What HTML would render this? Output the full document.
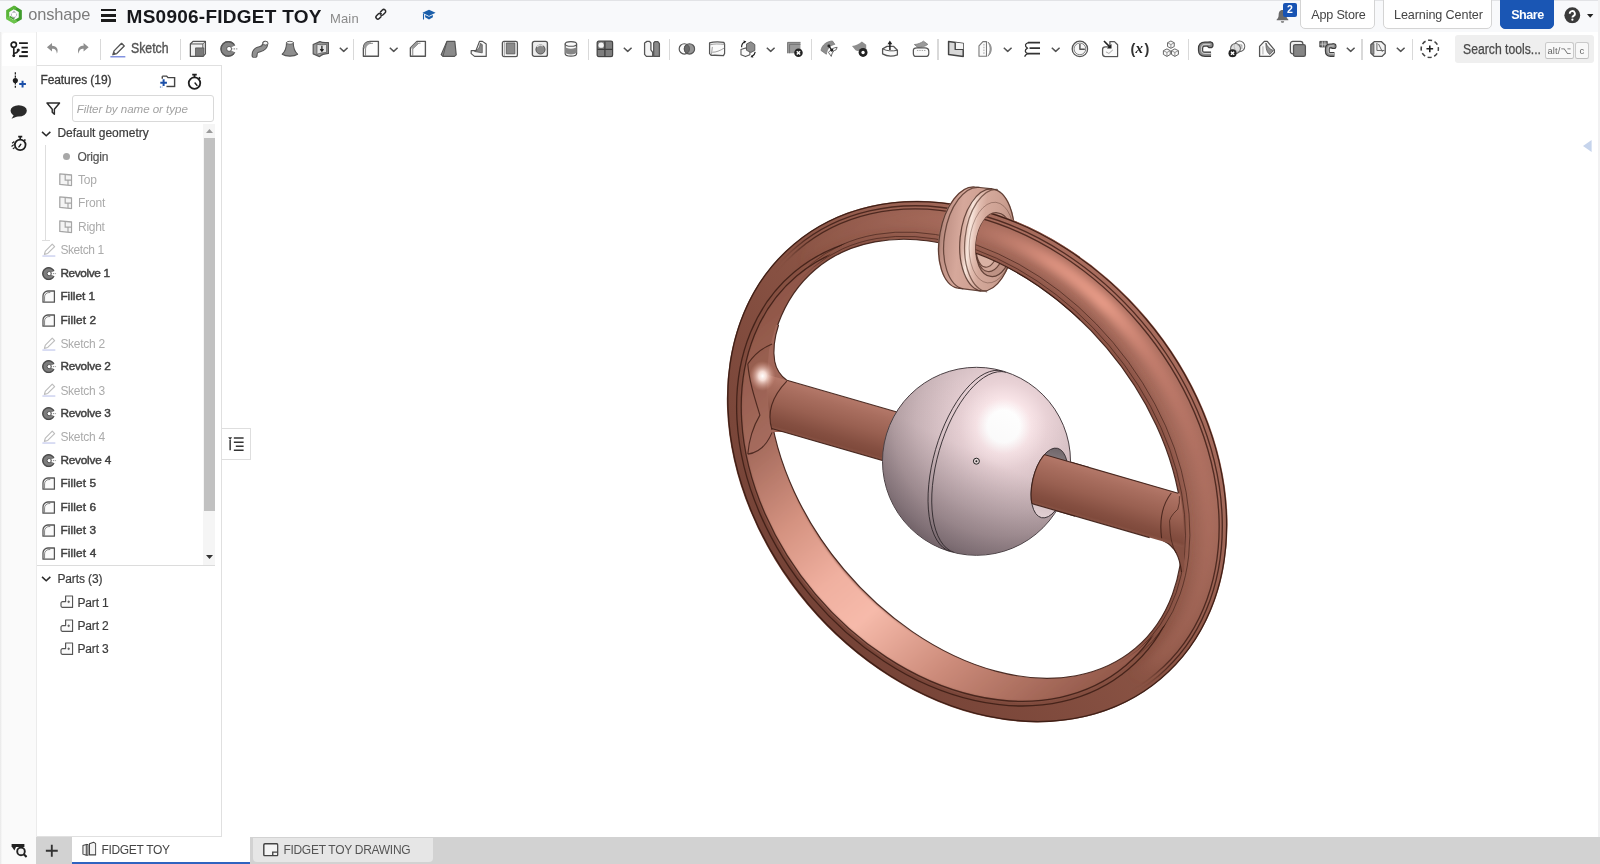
<!DOCTYPE html>
<html lang="en">
<head>
<meta charset="utf-8">
<title>MS0906-FIDGET TOY | Onshape</title>
<style>
*{box-sizing:border-box;margin:0;padding:0}
html,body{width:1600px;height:864px;overflow:hidden;background:#fff}
body{filter:blur(0.4px);font-family:"Liberation Sans",sans-serif;color:#333;position:relative;font-size:12px}
.a{position:absolute}
svg{position:absolute;overflow:visible}
#hdr{position:absolute;left:0;top:0;width:1600px;height:32px;background:#f8f9fb;border-top:1.6px solid #e2e3e6}
#tb{position:absolute;left:0;top:32px;width:1600px;height:34px;background:#fff}
#strip{position:absolute;left:0;top:32px;width:36.6px;height:832px;background:linear-gradient(90deg,#e6e6e6 0,#f3f3f3 1.2px,#fafafa 2.4px,#fafafa 100%);border-right:1.4px solid #ebebeb}
#strip .sel{position:absolute;left:2px;top:1px;width:34px;height:33px;background:#fff;border-radius:3px 0 0 0}
#panel{position:absolute;left:37px;top:65px;width:185px;height:772px;background:#fff;border:1px solid #e0e0e0;border-left:none}
#tabs{position:absolute;left:36.4px;top:836.8px;width:1563.6px;height:27.2px;background:#d2d2d2}
.t{position:absolute;white-space:nowrap;line-height:1}
.btn{position:absolute;top:-2px;height:31px;background:#fff;border:1px solid #d4d4d4;border-radius:0 0 5px 5px}
.sep{position:absolute;top:38.6px;width:1.6px;height:21.6px;background:#d9d9d9}

</style>
</head>
<body>
<svg width="0" height="0" style="position:absolute"><defs>
<symbol id="logo" viewBox="0 0 18 19.2"><g fill="none" stroke-width="3.1" stroke-linejoin="miter"><path d="M9 16.9 L15.3 13.25 L15.3 5.95 L9 2.3" stroke="#3f9b2c"/><path d="M2.7 13.25 L2.7 5.95 L9 2.3 L11.2 3.6" stroke="#59b437"/><path d="M2.7 11.6 L2.7 13.25 L9 16.9 L11.6 15.4" stroke="#6cc44b"/></g><path d="M4.6 11.4 L9.4 14.2" stroke="#4aa632" stroke-width="1.5" fill="none"/><path d="M9 5.4 L12.2 9.6 L9 13.8 L5.8 9.6 Z" fill="#7c7c8a" opacity=".7"/><circle cx="9" cy="9.6" r="2.3" fill="#fff"/></symbol>
<symbol id="link" viewBox="0 0 17 17"><g fill="none" stroke="#2b2b2b" stroke-width="2" stroke-linecap="round"><path d="M8.2 5.2 L10.6 2.8 a2.6 2.6 0 0 1 3.7 3.7 L11.6 9.2 a2.6 2.6 0 0 1 -3.7 0"/><path d="M8.8 11.8 L6.4 14.2 a2.6 2.6 0 0 1 -3.7 -3.7 L5.4 7.8 a2.6 2.6 0 0 1 3.7 0"/></g></symbol>
<symbol id="cap" viewBox="0 0 18 15"><path d="M9 1 L17.5 5 L9 9 L0.5 5 Z" fill="#1b5faa"/><path d="M4 7.6 L9 10 L14 7.6 L14 10.6 L9 13.6 L4 10.6 Z" fill="#1b5faa"/><path d="M1.2 5.4 L2.6 6 L2.6 13.5 L1.2 13.5 Z" fill="#1b5faa"/></symbol>
<symbol id="bell" viewBox="0 0 16 17"><path d="M8 1.2 C4.6 1.2 3.4 4 3.4 7 C3.4 10 2.4 11.4 1 12.6 L1 13.6 L15 13.6 L15 12.6 C13.6 11.4 12.6 10 12.6 7 C12.6 4 11.4 1.2 8 1.2 Z" fill="#6a6a6a"/><path d="M6 14.6 a2 2 0 0 0 4 0 Z" fill="#6a6a6a"/></symbol>
<symbol id="help" viewBox="0 0 18 18"><circle cx="9" cy="9" r="8.6" fill="#3a3a3a"/><path d="M6.2 7.2 a2.8 2.8 0 1 1 4.2 2.4 c-0.9 0.5 -1.3 0.9 -1.3 1.9" fill="none" stroke="#fff" stroke-width="2"/><circle cx="9.1" cy="13.8" r="1.2" fill="#fff"/></symbol>
<symbol id="tree" viewBox="0 0 18.5 17"><g fill="none" stroke="#1e1e1e" stroke-width="1.7"><circle cx="3.6" cy="3.8" r="2.7"/><path d="M3.6 6.5 V15"/><path d="M3.6 12.6 C6.5 12.6 7.6 11.6 8 9.6"/></g><circle cx="3.6" cy="15.2" r="1.5" fill="#1e1e1e"/><circle cx="8.2" cy="9.2" r="1.6" fill="#1e1e1e"/><g stroke="#1e1e1e" stroke-width="2"><path d="M9 2.2 H18"/><path d="M11.5 6.8 H18"/><path d="M11.5 11.2 H18"/><path d="M9 15.6 H18"/></g></symbol>
<symbol id="addf" viewBox="0 0 15 17"><path d="M3.4 0 V17" stroke="#222" stroke-width="1.3" stroke-dasharray="2.2 1.2" fill="none"/><circle cx="3.4" cy="8.4" r="2.6" fill="#1e1e1e"/><path d="M10.7 8.6 V15.4 M7.3 12 H14.1" stroke="#1b4fa8" stroke-width="2" fill="none"/></symbol>
<symbol id="comment" viewBox="0 0 18 15"><ellipse cx="9" cy="6.2" rx="8.6" ry="6" fill="#2a2a2a"/><path d="M4.5 9.5 L1.5 14.6 L8.5 11.6 Z" fill="#2a2a2a"/></symbol>
<symbol id="stopw" viewBox="0 0 18 17"><circle cx="9" cy="10.2" r="6.1" fill="none" stroke="#1e1e1e" stroke-width="1.9"/><path d="M6.6 1.2 H11.4 M9 1.2 V4 M13.6 4.2 L15 5.6" stroke="#1e1e1e" stroke-width="1.9" fill="none"/><path d="M9.6 10.2 L11.6 12.6" stroke="#1e1e1e" stroke-width="1.6" stroke-linecap="round"/></symbol>
<symbol id="stopw2" viewBox="0 0 18 17"><circle cx="10" cy="10.2" r="5.8" fill="none" stroke="#1e1e1e" stroke-width="1.9"/><path d="M7.8 1.2 H12.2 M10 1.2 V4 M14.4 4.4 L15.6 5.6" stroke="#1e1e1e" stroke-width="1.8" fill="none"/><path d="M10.6 9.6 L8.6 12.4" stroke="#1e1e1e" stroke-width="1.6" stroke-linecap="round"/><path d="M3.6 6.5 L1.2 8.4 M3 10 L0.6 12 M4 13 L2 14.6" stroke="#1e1e1e" stroke-width="1.2"/></symbol>
<symbol id="folderp" viewBox="0 0 17 13.5"><path d="M3 1.2 H7.6 L9 2.8 H16 V12.2 H7.4" fill="none" stroke="#444" stroke-width="1.5"/><path d="M3 1.2 V4" stroke="#444" stroke-width="1.5"/><path d="M4.4 4.6 V11.6 M0.9 8.1 H7.9" stroke="#1b4fa8" stroke-width="2.1" fill="none"/><path d="M0.5 12.8 H3" stroke="#1b4fa8" stroke-width="1.2" stroke-dasharray="1 1"/></symbol>
<symbol id="funnel" viewBox="0 0 15 13.6"><path d="M1 1 H14 L8.6 7.4 V12.6 L6.4 10.6 V7.4 Z" fill="none" stroke="#2b2b2b" stroke-width="1.5" stroke-linejoin="round"/></symbol>
<symbol id="chev" viewBox="0 0 11 6.5"><path d="M1 1 L5.5 5.2 L10 1" fill="none" stroke="#2b2b2b" stroke-width="1.7"/></symbol>
<symbol id="caret" viewBox="0 0 9.4 5.4"><path d="M0.8 0.8 L4.7 4.4 L8.6 0.8" fill="none" stroke="#555" stroke-width="1.5"/></symbol>
<symbol id="plane" viewBox="0 0 13.4 13.4"><path d="M0.8 0.8 L12.6 2 V12.6 L0.8 11.4 Z" fill="#f4f4f4" stroke="#a6a6a6" stroke-width="1.3" stroke-linejoin="round"/><path d="M6.2 1.4 V7.2 H12.4 M9 7.2 V12" fill="none" stroke="#a6a6a6" stroke-width="1.2"/></symbol>
<symbol id="sketch" viewBox="0 0 14 14"><path d="M2.4 11.6 L3.4 8.2 L10.4 1.2 L12.8 3.6 L5.8 10.6 Z" fill="none" stroke="#666" stroke-width="1.3" stroke-linejoin="round"/><path d="M0.4 13.4 H13.6" stroke="#7080d8" stroke-width="1.3"/></symbol>
<symbol id="sketchd" viewBox="0 0 14 14"><path d="M2.4 11.6 L3.4 8.2 L10.4 1.2 L12.8 3.6 L5.8 10.6 Z" fill="none" stroke="#bdbdbd" stroke-width="1.2" stroke-linejoin="round"/><path d="M0.4 13.4 H13.6" stroke="#b9c0ea" stroke-width="1.3"/></symbol>
<symbol id="revolve" viewBox="0 0 15 14"><circle cx="7" cy="7" r="6.4" fill="#7d7d7d" stroke="#4a4a4a" stroke-width="1.1"/><path d="M7 7 L14.4 3.6 L14.4 10.4 Z" fill="#fff"/><circle cx="7.6" cy="7" r="2.2" fill="#fff" stroke="#4a4a4a" stroke-width="0.9"/><path d="M12.2 4 A6 6 0 1 0 12.2 10" fill="none" stroke="#4a4a4a" stroke-width="0.9"/><path d="M9 7 H15" stroke="#666" stroke-width="0.8" stroke-dasharray="1.5 1"/></symbol>
<symbol id="fillet" viewBox="0 0 13.6 13.4"><path d="M1 12.4 V6 A5 5 0 0 1 6 1 H12.6 V12.4 Z" fill="#fafafa" stroke="#555" stroke-width="1.3" stroke-linejoin="round"/><path d="M2.6 12 V7 A4.4 4.4 0 0 1 7 2.6 H8.4" fill="none" stroke="#777" stroke-width="0.9"/></symbol>
<symbol id="part" viewBox="0 0 13.6 13.4"><path d="M5.6 1 H12.6 V12.4 H2.4 A1.6 1.6 0 0 1 1 10.8 V8.2 A1.6 1.6 0 0 1 2.6 6.6 H5.6 Z" fill="#fafafa" stroke="#555" stroke-width="1.2" stroke-linejoin="round"/><path d="M7.4 6.8 H10 M8.7 5.5 V8.1" stroke="#555" stroke-width="0.9"/></symbol>
<symbol id="treebtn" viewBox="0 0 18 16"><path d="M1 1 L4 4.4 M4 1 L1 4.4" stroke="#444" stroke-width="0" /><path d="M1.2 1.2 H5.2 L3.2 4 Z" fill="#333"/><g stroke="#333" stroke-width="1.5"><path d="M7 2 H17"/><path d="M3.2 4 V14.6"/><path d="M7 6.4 H17"/><path d="M9 10.6 H17"/><path d="M7 14.6 H17"/></g></symbol>
<symbol id="tabps" viewBox="0 0 15.6 16"><path d="M1 4.6 L4.6 3.4 V15 L1 13.8 Z M4.6 3.4 H6.4 V15 H4.6" fill="#f2f2f2" stroke="#444" stroke-width="1.1" stroke-linejoin="round"/><path d="M8 2.6 L12.4 1 L14.6 2.6 V14.6 H8 Z" fill="#f2f2f2" stroke="#444" stroke-width="1.1" stroke-linejoin="round"/></symbol>
<symbol id="tabdr" viewBox="0 0 16 14"><rect x="0.8" y="0.8" width="14.4" height="12.4" rx="1.2" fill="#f4f4f4" stroke="#444" stroke-width="1.5"/><path d="M10 13 V9.4 H15" fill="none" stroke="#444" stroke-width="1.4"/></symbol>
<symbol id="plus" viewBox="0 0 16 16"><path d="M8 1 V15 M1 8 H15" stroke="#333" stroke-width="2.2"/></symbol>
<symbol id="tabmgr" viewBox="0 0 16.4 15"><path d="M0.6 1 H13.4 V4 H0.6 Z" fill="#222"/><path d="M1 4 H5 L3.4 7.4 Z" fill="#222"/><circle cx="10" cy="8.4" r="3.8" fill="#f0f0f0" stroke="#222" stroke-width="1.9"/><path d="M12.8 11.2 L15.6 14" stroke="#222" stroke-width="2.2"/></symbol>
<symbol id="undo" viewBox="0 0 13 13"><path d="M6.2 1 L0.8 5.6 L6.2 10.2 V7.2 C9.6 7.2 11 8.6 11.4 12.6 C13.4 8 11.4 4 6.2 4 Z" fill="#8e8e8e"/></symbol>
<symbol id="redo" viewBox="0 0 13 13"><path d="M6.8 1 L12.2 5.6 L6.8 10.2 V7.2 C3.4 7.2 2 8.6 1.6 12.6 C-0.4 8 1.6 4 6.8 4 Z" fill="#8e8e8e"/></symbol>
<symbol id="pencil" viewBox="0 0 16.4 16"><path d="M3 13 L4.2 9 L12 1.2 L14.8 4 L7 11.8 Z" fill="#fff" stroke="#555" stroke-width="1.4" stroke-linejoin="round"/><path d="M3 13 L4 9.8 L6.2 12 Z" fill="#555"/><path d="M0.4 15.2 H16" stroke="#5a6fd6" stroke-width="1.4"/></symbol>
<symbol id="tb-extrude" viewBox="0 0 18 18"><path d="M1.4 4 L4 1.4 H16.6 V14 L14 16.6 H1.4 Z" fill="#f0f0f0" stroke="#555" stroke-width="1.3" stroke-linejoin="round"/><path d="M1.4 4 H14 V16.6 M14 4 L16.6 1.4" fill="none" stroke="#555" stroke-width="1" stroke-linejoin="round"/><rect x="6.6" y="8" width="8.4" height="8.4" fill="#7a7a7a" stroke="#555" stroke-width="0.8" stroke-linejoin="round"/></symbol>
<symbol id="tb-revolve" viewBox="0 0 18 18"><circle cx="8.4" cy="9" r="7.4" fill="#858585" stroke="#555" stroke-width="1.2" stroke-linejoin="round"/><path d="M8.4 9 L17 4.6 L17 13.4 Z" fill="#fff"/><path d="M14 4.2 A7.4 7.4 0 1 0 14 13.8" fill="none" stroke="#555" stroke-width="1.2" stroke-linejoin="round"/><circle cx="9.2" cy="9" r="2.5" fill="#fff" stroke="#555" stroke-width="0.9" stroke-linejoin="round"/><path d="M11 9 H17.6" stroke="#666" stroke-width="0.9" stroke-dasharray="1.6 1.1"/></symbol>
<symbol id="tb-sweep" viewBox="0 0 18 18"><path d="M3.6 15.4 C3.6 6 13.4 12.6 14.4 4" fill="none" stroke="#555" stroke-width="6.2" stroke-linecap="round"/><path d="M3.6 15.4 C3.6 6 13.4 12.6 14.4 4" fill="none" stroke="#909090" stroke-width="4" stroke-linecap="round"/><ellipse cx="14.6" cy="3.2" rx="2.6" ry="1.9" fill="#f4f4f4" stroke="#555" stroke-width="0.9" stroke-linejoin="round"/></symbol>
<symbol id="tb-loft" viewBox="0 0 18 18"><path d="M5.6 2.6 C5.6 8 4 12 1.2 14.4 C5 17 13 17 16.8 14.4 C14 12 12.4 8 12.4 2.6 Z" fill="#8e8e8e" stroke="#555" stroke-width="1.1" stroke-linejoin="round"/><ellipse cx="9" cy="2.8" rx="3.5" ry="1.5" fill="#f4f4f4" stroke="#555" stroke-width="0.9" stroke-linejoin="round"/></symbol>
<symbol id="tb-thicken" viewBox="0 0 18 18"><path d="M1.2 4.6 L8 1.6 C10 3 12 3 16.6 2.6 V13.6 C12 14 10 14.4 7.6 16.8 L1.2 14 Z" fill="#9a9a9a" stroke="#555" stroke-width="1.2" stroke-linejoin="round"/><path d="M5 4.2 C8 5 11 5 14.8 4.4 V12.6 C11 13 8 13 5 14.6 Z" fill="#e4e4e4" stroke="#555" stroke-width="0.8" stroke-linejoin="round"/><path d="M10 5.8 V10.6 M8.4 9.2 L10 11.4 L11.6 9.2" fill="none" stroke="#222" stroke-width="1.3"/></symbol>
<symbol id="tb-fillet" viewBox="0 0 18 18"><path d="M1.4 16.4 V8 A6.6 6.6 0 0 1 8 1.4 H16.6 V16.4 Z" fill="#fdfdfd" stroke="#555" stroke-width="1.4" stroke-linejoin="round"/><path d="M3.6 16 V9 A5.6 5.6 0 0 1 9.2 3.4 H11" fill="none" stroke="#777" stroke-width="0.9" stroke-linejoin="round"/><path d="M1.4 8 A6.6 6.6 0 0 1 8 1.4 L9.4 3.4 A5.6 5.6 0 0 0 3.6 9 Z" fill="#9a9a9a"/></symbol>
<symbol id="tb-chamfer" viewBox="0 0 18 18"><path d="M1.4 16.4 V8 L8 1.4 H16.6 V16.4 Z" fill="#fdfdfd" stroke="#555" stroke-width="1.4" stroke-linejoin="round"/><path d="M3.8 16 V9 L10 3.2 H11.6" fill="none" stroke="#777" stroke-width="0.9" stroke-linejoin="round"/><path d="M1.4 8 L8 1.4 L10 3.2 L3.8 9 Z" fill="#9a9a9a"/></symbol>
<symbol id="tb-draft" viewBox="0 0 18 18"><path d="M7 1.4 H15 L16.4 15 L14.6 16.6 H3 L1.2 14.8 Z" fill="#8a8a8a" stroke="#555" stroke-width="1.2" stroke-linejoin="round"/><path d="M7 1.4 L3 16.6" fill="none" stroke="#555" stroke-width="0.9" stroke-linejoin="round"/></symbol>
<symbol id="tb-rib" viewBox="0 0 18 18"><path d="M9.6 1.4 L12.6 1.4 L16.4 4 V16.6 H4.6 L1.2 13.8 V10.8 L6 10.8 Z" fill="#fafafa" stroke="#555" stroke-width="1.2" stroke-linejoin="round"/><path d="M10.4 3.4 C10 8 8 10.6 4.6 11.6 L12.4 13 V4.6 Z" fill="#8a8a8a" stroke="#555" stroke-width="0.8" stroke-linejoin="round"/></symbol>
<symbol id="tb-shell" viewBox="0 0 18 18"><rect x="1.4" y="1.4" width="15.2" height="15.4" rx="1.6" fill="#f2f2f2" stroke="#555" stroke-width="1.3" stroke-linejoin="round"/><rect x="5.4" y="3" width="8.6" height="11" fill="#8a8a8a" stroke="#555" stroke-width="0.8" stroke-linejoin="round"/><path d="M3.4 2 V16.4" fill="none" stroke="#999" stroke-width="0.8" stroke-linejoin="round"/></symbol>
<symbol id="tb-hole" viewBox="0 0 18 18"><rect x="1.4" y="1.4" width="15.2" height="15.2" rx="2" fill="#ededed" stroke="#555" stroke-width="1.4" stroke-linejoin="round"/><circle cx="9.6" cy="9.6" r="4.6" fill="#8a8a8a" stroke="#555" stroke-width="1" stroke-linejoin="round"/><path d="M6 7 A4.6 4.6 0 0 1 12 6" fill="none" stroke="#d8d8d8" stroke-width="1.3"/></symbol>
<symbol id="tb-thread" viewBox="0 0 18 18"><path d="M3.2 4 V14 A5.8 2.4 0 0 0 14.8 14 V4 Z" fill="#fafafa" stroke="#555" stroke-width="1.2" stroke-linejoin="round"/><path d="M3.2 6.6 V12.4 A5.8 2.2 0 0 0 14.8 12.4 V6.6 A5.8 2.2 0 0 1 3.2 6.6 Z" fill="#858585"/><ellipse cx="9" cy="4" rx="5.8" ry="2.4" fill="#fafafa" stroke="#555" stroke-width="1.1" stroke-linejoin="round"/></symbol>
<symbol id="tb-pattern" viewBox="0 0 18 18"><rect x="1.2" y="1.2" width="15.6" height="15.6" rx="1.6" fill="#7e7e7e" stroke="#444" stroke-width="1.3" stroke-linejoin="round"/><path d="M9 1.4 V16.6 M1.4 9.4 H16.6" stroke="#3c3c3c" stroke-width="1.3"/><circle cx="5.2" cy="5.2" r="2.7" fill="#f4f4f4"/></symbol>
<symbol id="tb-mirror" viewBox="0 0 18 18"><path d="M1.6 3 L4 1.4 H6.6 L8 3 V10 L9.8 12.4 V16.6 H3.4 L1.6 14.6 Z" fill="#f4f4f4" stroke="#555" stroke-width="1.3" stroke-linejoin="round"/><path d="M16.6 3.6 L15 1.6 H12 L10.8 3 V16.6 H16.6 Z" fill="#8a8a8a" stroke="#555" stroke-width="1.3" stroke-linejoin="round"/></symbol>
<symbol id="tb-boolean" viewBox="0 0 18 18"><circle cx="6.4" cy="9" r="5.2" fill="#fafafa" stroke="#555" stroke-width="1.2" stroke-linejoin="round"/><circle cx="11.6" cy="9" r="5.2" fill="#8a8a8a" fill-opacity=".9" stroke="#555" stroke-width="1.2" stroke-linejoin="round"/><path d="M9 4.5 A5.2 5.2 0 0 1 9 13.5 A5.2 5.2 0 0 1 9 4.5 Z" fill="#6a6a6a" stroke="#555" stroke-width="0.9" stroke-linejoin="round"/></symbol>
<symbol id="tb-split" viewBox="0 0 18 18"><path d="M1.6 3 C6 1.6 11 1.8 16 2.4 L16.8 4.2 V13.6 L15.6 15.8 C10 15.4 6 15.2 3.4 15.6 L1.6 13.8 Z" fill="#fafafa" stroke="#555" stroke-width="1.3" stroke-linejoin="round"/><path d="M1.8 5 C6 3.6 11 4 16.6 4.4 M3.4 15.4 L4.4 7 M4.4 12.4 C8 12.4 12 11 16.6 8" fill="none" stroke="#888" stroke-width="0.8" stroke-linejoin="round"/></symbol>
<symbol id="tb-transform" viewBox="0 0 18 18"><path d="M2 9.6 L6.6 8 L11 9.6 V15 L6.6 16.8 L2 15 Z" fill="#fafafa" stroke="#555" stroke-width="1.1" stroke-linejoin="round"/><path d="M7.6 4 L12 1.8 L16 4.6 V10.6 L12 12.6 L7.6 10.4 Z" fill="#8e8e8e" stroke="#555" stroke-width="0.9" stroke-linejoin="round"/><path d="M2.6 7.4 C2.6 4.6 4.2 2.6 6 1.8" fill="none" stroke="#222" stroke-width="1.2"/><path d="M4.4 0.4 L7.4 1.2 L5.6 3.6 Z" fill="#222"/><path d="M16.4 12 C16 14.4 14.6 16 13 16.8" fill="none" stroke="#222" stroke-width="1.2"/><path d="M14.6 18 L11.6 17.4 L13.2 15 Z" fill="#222"/></symbol>
<symbol id="tb-delpart" viewBox="0 0 18 18"><path d="M1.6 2.4 H14.6 V13.4 H1.6 Z" fill="#9a9a9a"/><path d="M1.6 2.4 H14.6 M3.6 4.4 H14.6 M3.6 4.4 V13.4 M1.6 2.4 V13.4" fill="none" stroke="#6e6e6e" stroke-width="0.9"/><circle cx="12.6" cy="13" r="4.3" fill="#222"/><path d="M10.9 11.3 L14.3 14.7 M14.3 11.3 L10.9 14.7" stroke="#fff" stroke-width="1.5"/></symbol>
<symbol id="tb-modfillet" viewBox="0 0 18 18"><path d="M1 10.6 C2 4.6 7 1.4 12.6 1 L15 4.4 C10 5.4 7.4 8.6 6.4 14.4 Z" fill="#8e8e8e" stroke="#777" stroke-width="0.8" stroke-linejoin="round"/><path d="M8.6 12.6 C10.6 9.6 13.6 7.6 17.4 7.4 L16.4 9.8 C13.6 10.6 12 13 11.4 16.6 Z" fill="#fafafa" stroke="#555" stroke-width="0.9" stroke-linejoin="round"/><path d="M9 6 L12 10.4" stroke="#222" stroke-width="1.3"/><circle cx="9" cy="6" r="1.5" fill="#222"/><circle cx="12" cy="10.4" r="1.5" fill="#222"/></symbol>
<symbol id="tb-delface" viewBox="0 0 18 18"><path d="M1 6 C5 5.6 8 4 11 1.4 L15.4 4.8 V11 C10 11.6 7 11.6 4.6 10.4 Z" fill="#8e8e8e"/><circle cx="12.2" cy="12.6" r="4.5" fill="#222"/><circle cx="12.2" cy="12.6" r="1.7" fill="#fff"/></symbol>
<symbol id="tb-moveface" viewBox="0 0 18 18"><path d="M1.6 9 L6 6.4 H12.6 L16.6 10.4 V15 C12 16.6 6 16.6 1.6 14 Z" fill="#fafafa" stroke="#555" stroke-width="1.3" stroke-linejoin="round"/><path d="M1.6 9 C6 11.4 12 11.4 16.6 10.4" fill="none" stroke="#555" stroke-width="1" stroke-linejoin="round"/><path d="M9 10 V3" stroke="#222" stroke-width="1.5"/><path d="M6.6 4.4 L9 0.6 L11.4 4.4 Z" fill="#222"/></symbol>
<symbol id="tb-replface" viewBox="0 0 18 18"><path d="M2.4 4.6 C6 4.4 9 3 11.6 1.2 L16 4.4 C13 6.6 10 7.4 6 7.6 Z" fill="#9a9a9a" stroke="#777" stroke-width="0.8" stroke-linejoin="round"/><path d="M1.4 10.4 C1.4 8.6 3 8 5 8 H13 C15.6 8 17 9.6 17 11.6 V13.6 C17 15.6 15.6 16.6 13.6 16.6 H4 C2.4 16.6 1.4 15.6 1.4 14 Z" fill="#fafafa" stroke="#555" stroke-width="1.3" stroke-linejoin="round"/><path d="M5 10.6 H14" stroke="#999" stroke-width="0.9" stroke-dasharray="1.4 1"/></symbol>
<symbol id="tb-plane" viewBox="0 0 18 18"><path d="M1.6 1.6 L16.4 3.6 V16.6 L1.6 14.6 Z" fill="#d8d8d8" stroke="#444" stroke-width="1.5" stroke-linejoin="round"/><path d="M8.4 2.6 V9.6 H16.2" fill="none" stroke="#444" stroke-width="1.2" stroke-linejoin="round"/><path d="M8.4 2.6 L16.4 3.6 V9.6 H8.4 Z" fill="#f4f4f4"/><path d="M8.4 2.6 V9.6 H16.2" fill="none" stroke="#444" stroke-width="1.2" stroke-linejoin="round"/></symbol>
<symbol id="tb-helix" viewBox="0 0 18 18"><path d="M2 6 L6 1.6 H9.6 V16.4 H2 Z" fill="#fafafa" stroke="#777" stroke-width="1.1" stroke-linejoin="round"/><path d="M11 2 C14 6 14 12 11 16.4 C15.6 13 15.6 5 11 2 Z" fill="#aaa" stroke="#888" stroke-width="0.9" stroke-linejoin="round"/><path d="M7 4 V14" stroke="#999" stroke-width="0.9" stroke-dasharray="1.6 1.2"/></symbol>
<symbol id="tb-curves" viewBox="0 0 18 18"><g fill="none" stroke="#333" stroke-width="1.9"><path d="M5 2.6 H17.2"/><path d="M6.6 8.2 H17.2"/><path d="M5 13.8 H17.2"/></g><g fill="none" stroke="#333" stroke-width="1.3"><path d="M5.4 2.6 C2 3.6 1.4 6 4.4 8.2 C1.4 10 1.6 12.6 5 13.8 C3 14.6 2.2 15.6 1.6 16.8"/></g></symbol>
<symbol id="tb-clock" viewBox="0 0 18 18"><circle cx="9" cy="9" r="7.8" fill="#f6f6f6" stroke="#555" stroke-width="1.3" stroke-linejoin="round"/><circle cx="9" cy="9" r="5.9" fill="none" stroke="#777" stroke-width="0.9" stroke-linejoin="round"/><path d="M9 4 V9.4 H14" fill="none" stroke="#555" stroke-width="1.5" stroke-linejoin="round"/></symbol>
<symbol id="tb-derived" viewBox="0 0 18 18"><path d="M1.6 9.4 C1.6 7.6 3 7 4.4 7 H9 V1.6 H13.6 L16.8 4.8 V16.8 H4.4 C2.6 16.8 1.6 15.4 1.6 14 Z" fill="#fafafa" stroke="#555" stroke-width="1.3" stroke-linejoin="round"/><path d="M3 1 L9.4 7.4" stroke="#222" stroke-width="1.6"/><path d="M6 8.6 L10.6 8.6 L10.6 4 Z" fill="#222"/><path d="M5 12 L8 13.6 L12 10" fill="none" stroke="#999" stroke-width="0.9"/></symbol>
<symbol id="tb-config" viewBox="0 0 18 18"><g fill="#fafafa" stroke="#666" stroke-width="1" stroke-linejoin="round"><path d="M9 1 L12.4 2.8 V6.6 L9 8.4 L5.6 6.6 V2.8 Z"/><path d="M5 9 L8.4 10.8 V14.6 L5 16.6 L1.4 14.6 V10.8 Z"/><path d="M13 9 L16.6 10.8 V14.6 L13 16.6 L9.6 14.6 V10.8 Z"/></g><g fill="none" stroke="#777" stroke-width="0.8" stroke-linejoin="round"><path d="M5.6 2.8 L9 4.6 L12.4 2.8 M9 4.6 V8.4"/><path d="M1.4 10.8 L5 12.6 L8.4 10.8 M5 12.6 V16.6"/><path d="M9.6 10.8 L13 12.6 L16.6 10.8 M13 12.6 V16.6"/></g></symbol>
<symbol id="tb-sheetmetal" viewBox="0 0 18 18"><path d="M14.2 4.2 H8 C4.6 4.2 3.6 5.8 3.6 8.4 V10.4 C3.6 13.4 5 14.4 8 14.4 H14.2" fill="none" stroke="#3c3c3c" stroke-width="5.4" stroke-linejoin="round"/><circle cx="13.4" cy="5" r="3.4" fill="#3c3c3c"/><path d="M14.2 4.2 H8 C4.6 4.2 3.6 5.8 3.6 8.4 V10.4 C3.6 13.4 5 14.4 8 14.4 H14.2" fill="none" stroke="#8a8a8a" stroke-width="3" stroke-linejoin="round"/><circle cx="13.4" cy="5" r="2.2" fill="#8a8a8a"/><path d="M13.6 4.4 H8 C5.4 4.4 4.6 5.8 4.6 8.4 V10.4 C4.6 12.8 5.6 13.6 8 13.6 H14" fill="none" stroke="#e0e0e0" stroke-width="0.9"/></symbol>
<symbol id="tb-unfold" viewBox="0 0 18 18"><circle cx="11.6" cy="6.4" r="5.4" fill="#fafafa" stroke="#666" stroke-width="1.1" stroke-linejoin="round"/><circle cx="7.6" cy="8.6" r="5" fill="#d8d8d8" fill-opacity=".8" stroke="#666" stroke-width="1.1" stroke-linejoin="round"/><path d="M9.6 5 H14 V9" fill="none" stroke="#888" stroke-width="0.8" stroke-linejoin="round"/><circle cx="4.6" cy="13.4" r="4.1" fill="#222"/><path d="M3 11.8 L6.2 15 M6.2 11.8 L3 15" stroke="#fff" stroke-width="1.4"/></symbol>
<symbol id="tb-tab" viewBox="0 0 18 18"><path d="M1.6 6.4 L6.4 1.4 H9.4 L16.6 10 V12.6 L12.6 16.6 H1.6 Z" fill="#fafafa" stroke="#555" stroke-width="1.3" stroke-linejoin="round"/><path d="M8 3 C9.4 6.6 12 9.6 15.6 10.6 L12 14.6 C9 13 8 9 8 3 Z" fill="#909090" stroke="#555" stroke-width="0.8" stroke-linejoin="round"/><path d="M5 6.4 V14.6" stroke="#999" stroke-width="0.8"/></symbol>
<symbol id="tb-frame" viewBox="0 0 18 18"><rect x="1.4" y="1.4" width="12.6" height="12.6" rx="2.4" fill="#f0f0f0" stroke="#555" stroke-width="1.3" stroke-linejoin="round"/><rect x="4.6" y="4.6" width="12" height="12" rx="1.8" fill="#858585" stroke="#555" stroke-width="1.3" stroke-linejoin="round"/></symbol>
<symbol id="tb-table" viewBox="0 0 18 18"><path d="M0.8 1.4 H8.4 V7 H0.8 Z" fill="#6e6e6e" stroke="#333" stroke-width="0.8"/><path d="M0.8 4.2 H8.4 M3.4 1.4 V7 M6 1.4 V7" stroke="#ddd" stroke-width="0.7"/><path d="M15.4 6 H11.4 C9 6 8.4 7.2 8.4 9.4 V11.2 C8.4 13.8 9.4 14.6 11.6 14.6 H15.6" fill="none" stroke="#3c3c3c" stroke-width="5" stroke-linejoin="round"/><circle cx="14.8" cy="6.2" r="3" fill="#3c3c3c"/><path d="M15.4 6 H11.4 C9 6 8.4 7.2 8.4 9.4 V11.2 C8.4 13.8 9.4 14.6 11.6 14.6 H15.6" fill="none" stroke="#8a8a8a" stroke-width="2.8" stroke-linejoin="round"/><circle cx="14.8" cy="6.2" r="1.9" fill="#8a8a8a"/><path d="M15 6 H11.4 C9.6 6 9.2 7.2 9.2 9.4 V11.2 C9.2 13.2 9.8 13.9 11.6 13.9 H15.4" fill="none" stroke="#e0e0e0" stroke-width="0.8"/></symbol>
<symbol id="tb-frames" viewBox="0 0 18 18"><path d="M2 4.6 L5.6 1.6 H12.4 L16.4 5.4 V13.4 L13 16.6 H5.4 L2 13.4 Z" fill="#f4f4f4" stroke="#555" stroke-width="1.3" stroke-linejoin="round"/><path d="M2 4.6 L5 3.6 V14.6 L2 13.4 Z" fill="#909090" stroke="#555" stroke-width="0.8" stroke-linejoin="round"/><path d="M8 3 V10.6 H15.6 M9.6 4 L13.6 12" fill="none" stroke="#666" stroke-width="1" stroke-linejoin="round"/></symbol>
<symbol id="tb-addcustom" viewBox="0 0 20 20"><circle cx="10" cy="10" r="8.8" fill="none" stroke="#444" stroke-width="1.6" stroke-dasharray="4.2 2.7" stroke-dashoffset="2"/><path d="M10 6.6 V13.4 M6.6 10 H13.4" stroke="#222" stroke-width="1.6"/></symbol>

</defs></svg>
<svg id="model" style="left:0;top:0" width="1600" height="864" viewBox="0 0 1600 864"><defs><clipPath id="sil"><path d="M1160.96 679.05 A284.70 221.10 49.8 1 1 793.44 244.15 A284.70 221.10 49.8 1 1 1160.96 679.05 Z" /></clipPath><clipPath id="cBi"><path d="M1150.97 637.74 A250.00 190.30 49.8 1 1 828.24 255.85 A250.00 190.30 49.8 1 1 1150.97 637.74 Z" /></clipPath><clipPath id="cFi"><path d="M1122.56 661.75 A250.00 190.30 49.8 1 1 799.83 279.86 A250.00 190.30 49.8 1 1 1122.56 661.75 Z" /></clipPath><mask id="notBi"><rect x="600" y="100" width="800" height="760" fill="#fff"/><path d="M1150.97 637.74 A250.00 190.30 49.8 1 1 828.24 255.85 A250.00 190.30 49.8 1 1 1150.97 637.74 Z" fill="#000"/></mask><mask id="notFi"><rect x="600" y="100" width="800" height="760" fill="#fff"/><path d="M1122.56 661.75 A250.00 190.30 49.8 1 1 799.83 279.86 A250.00 190.30 49.8 1 1 1122.56 661.75 Z" fill="#000"/></mask><filter id="b1" x="-30%" y="-30%" width="160%" height="160%"><feGaussianBlur stdDeviation="1"/></filter><filter id="b2" x="-30%" y="-30%" width="160%" height="160%"><feGaussianBlur stdDeviation="2"/></filter><filter id="b4" x="-30%" y="-30%" width="160%" height="160%"><feGaussianBlur stdDeviation="4"/></filter><filter id="b7" x="-30%" y="-30%" width="160%" height="160%"><feGaussianBlur stdDeviation="7"/></filter><filter id="b12" x="-30%" y="-30%" width="160%" height="160%"><feGaussianBlur stdDeviation="12"/></filter><linearGradient id="gBase" gradientUnits="userSpaceOnUse" x1="1149.1" y1="316.4" x2="805.3" y2="606.8"><stop offset="0" stop-color="#a96d5e"/><stop offset="0.15" stop-color="#a3695a"/><stop offset="0.5" stop-color="#8a5344"/><stop offset="0.85" stop-color="#7b473a"/><stop offset="1" stop-color="#754337"/></linearGradient><linearGradient id="gInner" gradientUnits="userSpaceOnUse" x1="814.0" y1="267.9" x2="1136.8" y2="649.7"><stop offset="0" stop-color="#905748"/><stop offset="0.2" stop-color="#a56b5d"/><stop offset="0.36" stop-color="#d49280"/><stop offset="0.5" stop-color="#f0b0a0"/><stop offset="0.6" stop-color="#f6baaa"/><stop offset="0.78" stop-color="#cc8b7a"/><stop offset="1" stop-color="#965c4d"/></linearGradient><linearGradient id="gHi" gradientUnits="userSpaceOnUse" x1="793.2" y1="243.9" x2="1161.2" y2="679.3"><stop offset="0" stop-color="#d58b7a" stop-opacity="0"/><stop offset="0.18" stop-color="#d58b7a" stop-opacity="0.15"/><stop offset="0.32" stop-color="#e29683" stop-opacity="0.9"/><stop offset="0.43" stop-color="#e89c88" stop-opacity="1"/><stop offset="0.56" stop-color="#d28776" stop-opacity="0.65"/><stop offset="0.75" stop-color="#bf7869" stop-opacity="0.4"/><stop offset="1" stop-color="#b67565" stop-opacity="0.25"/></linearGradient><linearGradient id="gDk" gradientUnits="userSpaceOnUse" x1="793.2" y1="243.9" x2="1161.2" y2="679.3"><stop offset="0" stop-color="#734134" stop-opacity="0.2"/><stop offset="0.4" stop-color="#804a3d" stop-opacity="0.7"/><stop offset="0.7" stop-color="#804a3d" stop-opacity="0.8"/><stop offset="1" stop-color="#734134" stop-opacity="0.5"/></linearGradient></defs><mask id="band" maskUnits="userSpaceOnUse" x="600" y="100" width="800" height="760"><path d="M1160.96 679.05 A284.70 221.10 49.8 1 1 793.44 244.15 A284.70 221.10 49.8 1 1 1160.96 679.05 Z" fill="#fff"/><path d="M1135.41 648.15 A247.90 171.70 49.8 1 1 815.39 269.45 A247.90 171.70 49.8 1 1 1135.41 648.15 Z" fill="#000"/></mask><g id="ring"><g mask="url(#band)"><rect x="680" y="180" width="600" height="580" fill="url(#gBase)"/><g filter="url(#b4)"><g mask="url(#hiMask)"><path d="M1151.52 664.78 A267.70 199.10 49.8 1 1 805.94 255.84 A267.70 199.10 49.8 1 1 1151.52 664.78 Z" fill="none" stroke="url(#gHi)" stroke-width="15"/></g></g><g filter="url(#b4)"><g mask="url(#hiMask)"><path d="M1123.85 663.28 A252.00 192.30 49.8 1 1 798.54 278.33 A252.00 192.30 49.8 1 1 1123.85 663.28 Z" fill="none" stroke="url(#gDk)" stroke-width="12"/></g></g><g filter="url(#b1)"><g mask="url(#notBi)"><path d="M1125.79 665.57 A255.00 190.80 49.8 1 1 796.60 276.04 A255.00 190.80 49.8 1 1 1125.79 665.57 Z" fill="url(#gInner)"/></g></g></g><mask id="hiMask" maskUnits="userSpaceOnUse" x="500" y="0" width="1000" height="900"><polygon points="719.0,156.1 1235.4,767.1 1540.9,508.9 1024.5,-102.1" fill="#fff" filter="url(#b12)"/></mask><g fill="none" stroke="#3b1c14" stroke-width="1.15" stroke-opacity="0.9"><path d="M1135.41 648.15 A247.90 171.70 49.8 1 1 815.39 269.45 A247.90 171.70 49.8 1 1 1135.41 648.15 Z" /><g mask="url(#notBi)" stroke-opacity="0.85" stroke-width="1.3"><path d="M1125.79 665.57 A255.00 190.80 49.8 1 1 796.60 276.04 A255.00 190.80 49.8 1 1 1125.79 665.57 Z" /><path d="M1128.69 669.01 A259.50 195.10 49.8 1 1 793.70 272.60 A259.50 195.10 49.8 1 1 1128.69 669.01 Z" /></g><g mask="url(#hiMask)" stroke-opacity="0.8" stroke-width="1.35"><path d="M1158.38 676.00 A280.70 216.10 49.8 1 1 796.02 247.20 A280.70 216.10 49.8 1 1 1158.38 676.00 Z" /><path d="M1156.12 673.32 A277.20 211.60 49.8 1 1 798.28 249.88 A277.20 211.60 49.8 1 1 1156.12 673.32 Z" /></g><g mask="url(#hiMask)" stroke-opacity="0.6" stroke-width="1"><path d="M1137.35 650.44 A250.90 175.20 49.8 1 1 813.45 267.16 A250.90 175.20 49.8 1 1 1137.35 650.44 Z" /><path d="M1139.93 653.49 A254.90 180.20 49.8 1 1 810.87 264.11 A254.90 180.20 49.8 1 1 1139.93 653.49 Z" /></g><path d="M1160.70 678.75 A284.30 220.70 49.8 1 1 793.70 244.45 A284.30 220.70 49.8 1 1 1160.70 678.75 Z" stroke-width="1.3" stroke-opacity="0.95"/></g></g><defs><linearGradient id="gBar" gradientUnits="userSpaceOnUse" x1="983.5" y1="437.0" x2="969.5" y2="485.6"><stop offset="0" stop-color="#b47869"/><stop offset="0.18" stop-color="#a96e5f"/><stop offset="0.5" stop-color="#996051"/><stop offset="0.8" stop-color="#854f41"/><stop offset="0.93" stop-color="#7f4a3c"/><stop offset="1" stop-color="#895446"/></linearGradient><radialGradient id="gSph" gradientUnits="userSpaceOnUse" cx="1003.6" cy="426.3" r="146"><stop offset="0" stop-color="#fff"/><stop offset="0.11" stop-color="#fff"/><stop offset="0.19" stop-color="#f8e4e7"/><stop offset="0.3" stop-color="#e9d2d6"/><stop offset="0.45" stop-color="#dac4c8"/><stop offset="0.6" stop-color="#cbb6ba"/><stop offset="0.75" stop-color="#b7a3a7"/><stop offset="0.88" stop-color="#9a898e"/><stop offset="1" stop-color="#75676c"/></radialGradient><radialGradient id="gSpec" cx="0.5" cy="0.5" r="0.5"><stop offset="0" stop-color="#fff" stop-opacity="1"/><stop offset="0.3" stop-color="#ffe9e2" stop-opacity="0.9"/><stop offset="1" stop-color="#d79a88" stop-opacity="0"/></radialGradient></defs><path d="M776 325 L778.6 325 Q772 345 774.7 361.3 Q777 373 786.8 380.3 L796 383 L790 432 L771 432 L766.8 400 L766.5 380 L769 350 Z" fill="#a2685a"/><path d="M1150 536 L1163.2 540.8 Q1172 545 1176.2 553 Q1180 560 1181.5 572 L1184 572 L1184.4 545 L1181 520 L1160 530 Z" fill="#855042"/><clipPath id="cHoleE"><path d="M1136.05 648.91 A248.90 172.70 49.8 1 1 814.75 268.69 A248.90 172.70 49.8 1 1 1136.05 648.91 Z" /></clipPath><path d="M768.3 374.9 L983.5 437.0 L969.5 485.6 L744.7 420.7 Z" fill="url(#gBar)" clip-path="url(#cHoleE)"/><ellipse cx="762.5" cy="376" rx="13" ry="15" fill="url(#gSpec)"/><g fill="none" stroke="#3b1c14" stroke-width="1.1" stroke-opacity="0.9"><path d="M787.0 380.3 L983.5 437.0"/><path d="M771.6 428.5 L969.5 485.6"/><path d="M778.6 325 Q772 345 774.7 361.3 Q777 373 786.8 380.3"/><path d="M1163.2 540.8 Q1172 545 1176.2 553 Q1180 560 1181.5 572"/><path d="M786.8 381.2 Q764 405 772 429.8" stroke-opacity="0.8"/><path d="M747.8 363.9 Q757 350 772.1 343.9 M747.8 454.1 Q764 452 772.1 432.4 M747.8 363.9 C749 380 754 396 759.9 415.1 C754 425 749 440 747.8 454.1" stroke-opacity="0.8" stroke-width="1.1"/></g><path d="M1041.2 453.6 L1214.1 503.5 L1200.1 552.2 L1027.1 502.2 Z" fill="url(#gBar)" clip-path="url(#cHoleE)"/><g fill="none" stroke="#3b1c14" stroke-width="1.1" stroke-opacity="0.9"><path d="M1041.2 453.6 L1178.2 493.2"/><path d="M1027.1 502.2 L1149.6 537.6"/><path d="M1171.3 493 Q1158 510 1161.6 538.3" stroke-opacity="0.8"/><path d="M1179.4 496.2 Q1180 503 1177.8 509.2 Q1168 518 1169.7 523.8 Q1170 534 1171.3 540 Q1173 548 1176.2 553" stroke-opacity="0.75" stroke-width="0.9"/></g><circle cx="976.5" cy="461.3" r="94.0" fill="url(#gSph)" stroke="#4a4044" stroke-width="1"/><linearGradient id="gSphDk" gradientUnits="userSpaceOnUse" x1="1010" y1="400" x2="935" y2="560"><stop offset="0" stop-color="#5a4b52" stop-opacity="0"/><stop offset="0.35" stop-color="#5a4b52" stop-opacity="0.04"/><stop offset="0.7" stop-color="#5a4b52" stop-opacity="0.3"/><stop offset="1" stop-color="#5a4b52" stop-opacity="0.5"/></linearGradient><circle cx="976.5" cy="461.3" r="93.5" fill="url(#gSphDk)"/><g fill="none" stroke="#2e272a" stroke-width="1" stroke-opacity="0.9" clip-path="url(#cSph)"><path d="M1002.6 371.0 A43.0 94.0 16.1 0 0 950.4 551.6"/><path d="M1006.0 372.2 A43.0 93.8 16.1 0 0 953.9 552.4"/></g><clipPath id="cSph"><circle cx="976.5" cy="461.3" r="94.0"/></clipPath><clipPath id="cHole"><path d="M1041.49 517.69 A35.60 17.00 103.0 1 1 1057.51 448.31 A35.60 17.00 103.0 1 1 1041.49 517.69 Z"/></clipPath><clipPath id="cBarOut"><path d="M1041.49 517.69 A35.60 17.00 103.0 1 1 1057.51 448.31 A35.60 17.00 103.0 1 1 1041.49 517.69 Z"/><polygon points="1036.0,541.5 1063.0,424.5 1300.0,380.0 1300.0,640.0"/></clipPath><linearGradient id="gHoleIn" gradientUnits="userSpaceOnUse" x1="1056.0" y1="448.0" x2="1043.0" y2="518.0"><stop offset="0" stop-color="#6f666a"/><stop offset="0.25" stop-color="#8d8185"/><stop offset="0.6" stop-color="#c9b6ba"/><stop offset="1" stop-color="#e2d0d3"/></linearGradient><g clip-path="url(#cSph)"><path d="M1041.49 517.69 A35.60 17.00 103.0 1 1 1057.51 448.31 A35.60 17.00 103.0 1 1 1041.49 517.69 Z" fill="url(#gHoleIn)" stroke="#3a3236" stroke-width="1"/></g><g clip-path="url(#cBarOut)"><path d="M1021.9 448.1 L1089.2 467.5 L1075.2 516.1 L1007.9 496.7 Z" fill="url(#gBar)"/><path d="M1021.9 448.1 L1089.2 467.5 M1007.9 496.7 L1075.2 516.1" fill="none" stroke="#3b1c14" stroke-width="1.1" stroke-opacity="0.9"/></g><g clip-path="url(#cBarBand)"><path d="M1041.49 517.69 A35.60 17.00 103.0 1 1 1057.51 448.31 A35.60 17.00 103.0 1 1 1041.49 517.69 Z" fill="none" stroke="#3b1c14" stroke-width="1.2" stroke-opacity="0.85"/></g><clipPath id="cBarBand"><polygon points="1012.3,445.3 1056.5,458.1 1042.5,506.7 998.3,493.9"/></clipPath><circle cx="976.4" cy="461.2" r="3" fill="#e8dadb" stroke="#222" stroke-width="1"/><circle cx="976.4" cy="461.2" r="1" fill="#222"/><defs><linearGradient id="gBeadBody" gradientUnits="userSpaceOnUse" x1="938.0" y1="240.0" x2="990.0" y2="246.0"><stop offset="0" stop-color="#A57C70"/><stop offset="0.1" stop-color="#C09286"/><stop offset="0.4" stop-color="#D6A89B"/><stop offset="0.7" stop-color="#D0A294"/><stop offset="1" stop-color="#CA9C8E"/></linearGradient><linearGradient id="gBeadFace" gradientUnits="userSpaceOnUse" x1="958.0" y1="236.0" x2="1016.0" y2="243.0"><stop offset="0" stop-color="#CA9C8E"/><stop offset="0.1" stop-color="#DDB6A9"/><stop offset="0.19" stop-color="#F8E6DC"/><stop offset="0.3" stop-color="#E2BDB0"/><stop offset="0.42" stop-color="#D4A99B"/><stop offset="0.7" stop-color="#CCA092"/><stop offset="1" stop-color="#B88C7E"/></linearGradient><clipPath id="cBeadHole"><path d="M990.86 276.42 A32.00 18.00 96.0 1 1 997.54 212.78 A32.00 18.00 96.0 1 1 990.86 276.42 Z"/></clipPath><clipPath id="cBeadFront"><path d="M990.86 276.42 A32.00 18.00 96.0 1 1 997.54 212.78 A32.00 18.00 96.0 1 1 990.86 276.42 Z"/><polygon points="1001.5,175.0 1080,170 1080,340 984.8,334.1"/></clipPath></defs><path d="M957.47 288.22 A51.40 27.60 100.0 1 1 975.33 186.98 A51.40 27.60 100.0 1 1 957.47 288.22 Z" fill="url(#gBeadBody)"/><path d="M975.3 187.0 L992.4 188.9 L981.6 291.1 L957.5 288.2 Z" fill="url(#gBeadBody)"/><path d="M981.63 291.12 A51.40 27.60 96.0 1 1 992.37 188.88 A51.40 27.60 96.0 1 1 981.63 291.12 Z" fill="url(#gBeadFace)"/><path d="M990.86 276.42 A32.00 18.00 96.0 1 1 997.54 212.78 A32.00 18.00 96.0 1 1 990.86 276.42 Z" fill="#BE9284"/><g clip-path="url(#cBeadHole)" fill="none" stroke="#5A382E" stroke-width="1.1" stroke-opacity="0.85"><path d="M987.93 271.55 A27.50 14.60 96.0 1 1 993.67 216.85 A27.50 14.60 96.0 1 1 987.93 271.55 Z" stroke="none" fill="#D0A698"/><path d="M987.93 271.55 A27.50 14.60 96.0 1 1 993.67 216.85 A27.50 14.60 96.0 1 1 987.93 271.55 Z"/><path d="M985.34 267.17 A23.50 11.40 96.0 1 1 990.26 220.43 A23.50 11.40 96.0 1 1 985.34 267.17 Z" stroke="none" fill="#D9B2A4"/><path d="M985.34 267.17 A23.50 11.40 96.0 1 1 990.26 220.43 A23.50 11.40 96.0 1 1 985.34 267.17 Z"/></g><g fill="none" stroke="#54342A" stroke-width="1.25" stroke-opacity="0.9"><path d="M975.3 187.0 A51.4 27.6 100.0 0 0 957.5 288.2"/><path d="M975.3 187.0 L992.4 188.9 M957.5 288.2 L981.6 291.1"/><path d="M992.4 188.9 A51.4 27.6 96.0 0 1 981.6 291.1"/><path d="M979.4 187.4 A51.4 27.6 99.0 0 0 963.3 288.9" stroke-opacity="0.8"/><path d="M992.4 188.9 A51.4 27.6 96.0 0 0 981.6 291.1" stroke-opacity="0.85"/><path d="M997.9 189.5 A51.4 27.6 96.0 0 0 987.2 291.8" stroke-opacity="0.7"/><path d="M990.86 276.42 A32.00 18.00 96.0 1 1 997.54 212.78 A32.00 18.00 96.0 1 1 990.86 276.42 Z" stroke-opacity="0.85"/><path d="M987.37 282.88 A40.50 22.20 96.0 1 1 995.83 202.32 A40.50 22.20 96.0 1 1 987.37 282.88 Z" stroke-opacity="0.4" stroke-width="1"/></g><use href="#ring" clip-path="url(#cBeadFront)"/></svg>
<div id="hdr"></div>
<svg style="left:4.5px;top:4.9px" width="18" height="19.4" ><use href="#logo" width="18" height="19.4"/></svg><span class="t" style="left:28.20px;top:5.68px;font-size:16.4px;letter-spacing:-0.127px;color:#7c7c7c;">onshape</span><div class="a" style="left:101.3px;top:8.9px;width:15px;height:2.6px;background:#1c1c1c"></div><div class="a" style="left:101.3px;top:14.1px;width:15px;height:2.6px;background:#1c1c1c"></div><div class="a" style="left:101.3px;top:19.3px;width:15px;height:2.6px;background:#1c1c1c"></div><span class="t" style="left:126.60px;top:6.82px;font-size:19px;letter-spacing:0.250px;color:#17181c;font-weight:bold;">MS0906-FIDGET TOY</span><span class="t" style="left:330.00px;top:11.80px;font-size:13px;letter-spacing:0.156px;color:#8a8a8a;">Main</span><svg style="left:374px;top:8.4px" width="13.6" height="12.6" ><use href="#link" width="13.6" height="12.6"/></svg><svg style="left:422.4px;top:8.6px" width="14" height="11.6" ><use href="#cap" width="14" height="11.6"/></svg><svg style="left:1275px;top:9.4px" width="15" height="14.2" ><use href="#bell" width="15" height="14.2"/></svg><div class="a" style="left:1282.6px;top:2.6px;width:14.4px;height:14px;background:#1853b3;border-radius:2px"></div><span class="t" style="left:1287.00px;top:4.48px;font-size:10.5px;color:#fff;font-weight:bold;">2</span><div class="btn" style="left:1300.4px;width:75px"></div><span class="t" style="left:1311.20px;top:8.64px;font-size:12.6px;letter-spacing:-0.179px;color:#444;">App Store</span><div class="btn" style="left:1383.4px;width:109px"></div><span class="t" style="left:1394.00px;top:8.64px;font-size:12.6px;letter-spacing:-0.101px;color:#444;">Learning Center</span><div class="btn" style="left:1500px;width:54.4px;background:#1a56b4;border-color:#1a56b4"></div><span class="t" style="left:1511.20px;top:8.64px;font-size:12.6px;letter-spacing:-0.480px;color:#fff;font-weight:bold;">Share</span><svg style="left:1563.6px;top:7.4px" width="16.6" height="16.6" ><use href="#help" width="16.6" height="16.6"/></svg><svg style="left:1586.6px;top:13.6px" width="6.4" height="3.8"><path d="M0 0 H6.4 L3.2 3.8 Z" fill="#222"/></svg>
<div id="tb"></div>
<div class="a" style="left:1598.4px;top:0;width:1.6px;height:864px;background:#f1f1f2"></div><svg style="left:1583.4px;top:140px" width="8.6" height="12"><path d="M8.6 0 L0 6 L8.6 12 Z" fill="#c6d4ec"/></svg><svg style="left:45.6px;top:42.4px" width="12.6" height="12.2" ><use href="#undo" width="12.6" height="12.2"/></svg><svg style="left:76.8px;top:42.4px" width="12.6" height="12.2" ><use href="#redo" width="12.6" height="12.2"/></svg><div class="sep" style="left:99.9px"></div><div class="sep" style="left:179.9px"></div><div class="sep" style="left:352.7px"></div><div class="sep" style="left:587.7px"></div><div class="sep" style="left:668.7px"></div><div class="sep" style="left:810.7px"></div><div class="sep" style="left:937.2px"></div><div class="sep" style="left:1187.7px"></div><div class="sep" style="left:1361.2px"></div><div class="sep" style="left:1411.7px"></div><svg style="left:110px;top:41.8px" width="15.8" height="15.8" ><use href="#pencil" width="15.8" height="15.8"/></svg><span class="t" style="left:130.60px;top:42.44px;font-size:13.8px;transform:scaleX(0.8914);transform-origin:0 0;color:#555;-webkit-text-stroke:0.35px #505050;">Sketch</span><svg style="left:189.1px;top:40.1px" width="17.8" height="17.8" ><use href="#tb-extrude" width="17.8" height="17.8"/></svg><svg style="left:219.7px;top:40.1px" width="17.8" height="17.8" ><use href="#tb-revolve" width="17.8" height="17.8"/></svg><svg style="left:250.6px;top:40.1px" width="17.8" height="17.8" ><use href="#tb-sweep" width="17.8" height="17.8"/></svg><svg style="left:281.1px;top:40.1px" width="17.8" height="17.8" ><use href="#tb-loft" width="17.8" height="17.8"/></svg><svg style="left:311.7px;top:40.1px" width="17.8" height="17.8" ><use href="#tb-thicken" width="17.8" height="17.8"/></svg><svg style="left:361.8px;top:40.1px" width="17.8" height="17.8" ><use href="#tb-fillet" width="17.8" height="17.8"/></svg><svg style="left:409.1px;top:40.1px" width="17.8" height="17.8" ><use href="#tb-chamfer" width="17.8" height="17.8"/></svg><svg style="left:439.7px;top:40.1px" width="17.8" height="17.8" ><use href="#tb-draft" width="17.8" height="17.8"/></svg><svg style="left:470.1px;top:40.1px" width="17.8" height="17.8" ><use href="#tb-rib" width="17.8" height="17.8"/></svg><svg style="left:501.1px;top:40.1px" width="17.8" height="17.8" ><use href="#tb-shell" width="17.8" height="17.8"/></svg><svg style="left:531.1px;top:40.1px" width="17.8" height="17.8" ><use href="#tb-hole" width="17.8" height="17.8"/></svg><svg style="left:562.1px;top:40.1px" width="17.8" height="17.8" ><use href="#tb-thread" width="17.8" height="17.8"/></svg><svg style="left:596.1px;top:40.1px" width="17.8" height="17.8" ><use href="#tb-pattern" width="17.8" height="17.8"/></svg><svg style="left:643.1px;top:40.1px" width="17.8" height="17.8" ><use href="#tb-mirror" width="17.8" height="17.8"/></svg><svg style="left:677.6px;top:40.1px" width="17.8" height="17.8" ><use href="#tb-boolean" width="17.8" height="17.8"/></svg><svg style="left:708.1px;top:40.1px" width="17.8" height="17.8" ><use href="#tb-split" width="17.8" height="17.8"/></svg><svg style="left:738.6px;top:40.1px" width="17.8" height="17.8" ><use href="#tb-transform" width="17.8" height="17.8"/></svg><svg style="left:786.1px;top:40.1px" width="17.8" height="17.8" ><use href="#tb-delpart" width="17.8" height="17.8"/></svg><svg style="left:819.6px;top:40.1px" width="17.8" height="17.8" ><use href="#tb-modfillet" width="17.8" height="17.8"/></svg><svg style="left:850.6px;top:40.1px" width="17.8" height="17.8" ><use href="#tb-delface" width="17.8" height="17.8"/></svg><svg style="left:881.1px;top:40.1px" width="17.8" height="17.8" ><use href="#tb-moveface" width="17.8" height="17.8"/></svg><svg style="left:912.1px;top:40.1px" width="17.8" height="17.8" ><use href="#tb-replface" width="17.8" height="17.8"/></svg><svg style="left:946.6px;top:40.1px" width="17.8" height="17.8" ><use href="#tb-plane" width="17.8" height="17.8"/></svg><svg style="left:976.6px;top:40.1px" width="17.8" height="17.8" ><use href="#tb-helix" width="17.8" height="17.8"/></svg><svg style="left:1023.1px;top:40.1px" width="17.8" height="17.8" ><use href="#tb-curves" width="17.8" height="17.8"/></svg><svg style="left:1071.1px;top:40.1px" width="17.8" height="17.8" ><use href="#tb-clock" width="17.8" height="17.8"/></svg><svg style="left:1101.1px;top:40.1px" width="17.8" height="17.8" ><use href="#tb-derived" width="17.8" height="17.8"/></svg><svg style="left:1162.1px;top:40.1px" width="17.8" height="17.8" ><use href="#tb-config" width="17.8" height="17.8"/></svg><svg style="left:1197.1px;top:40.1px" width="17.8" height="17.8" ><use href="#tb-sheetmetal" width="17.8" height="17.8"/></svg><svg style="left:1227.6px;top:40.1px" width="17.8" height="17.8" ><use href="#tb-unfold" width="17.8" height="17.8"/></svg><svg style="left:1258.1px;top:40.1px" width="17.8" height="17.8" ><use href="#tb-tab" width="17.8" height="17.8"/></svg><svg style="left:1288.6px;top:40.1px" width="17.8" height="17.8" ><use href="#tb-frame" width="17.8" height="17.8"/></svg><svg style="left:1319.1px;top:40.1px" width="17.8" height="17.8" ><use href="#tb-table" width="17.8" height="17.8"/></svg><svg style="left:1369.1px;top:40.1px" width="17.8" height="17.8" ><use href="#tb-frames" width="17.8" height="17.8"/></svg><svg style="left:1419.6px;top:39px" width="19.6" height="19.6" ><use href="#tb-addcustom" width="19.6" height="19.6"/></svg><svg style="left:338.5px;top:46.8px" width="9.4" height="5.4" ><use href="#caret" width="9.4" height="5.4"/></svg><svg style="left:388.5px;top:46.8px" width="9.4" height="5.4" ><use href="#caret" width="9.4" height="5.4"/></svg><svg style="left:622.9px;top:46.8px" width="9.4" height="5.4" ><use href="#caret" width="9.4" height="5.4"/></svg><svg style="left:765.5px;top:46.8px" width="9.4" height="5.4" ><use href="#caret" width="9.4" height="5.4"/></svg><svg style="left:1003.3px;top:46.8px" width="9.4" height="5.4" ><use href="#caret" width="9.4" height="5.4"/></svg><svg style="left:1050.5px;top:46.8px" width="9.4" height="5.4" ><use href="#caret" width="9.4" height="5.4"/></svg><svg style="left:1345.9px;top:46.8px" width="9.4" height="5.4" ><use href="#caret" width="9.4" height="5.4"/></svg><svg style="left:1396.3px;top:46.8px" width="9.4" height="5.4" ><use href="#caret" width="9.4" height="5.4"/></svg><span class="t" style="left:1130.60px;top:41.96px;font-size:14.5px;color:#333;font-weight:bold;">(</span><span class="t" style="left:1135.40px;top:41.14px;font-size:15px;color:#222;font-weight:bold;font-style:italic;font-family:'Liberation Serif',serif;">x</span><span class="t" style="left:1144.60px;top:41.96px;font-size:14.5px;color:#333;font-weight:bold;">)</span><div class="a" style="left:1455px;top:35px;width:139.4px;height:28.2px;background:#efefef;border-radius:3px"></div><span class="t" style="left:1463.00px;top:42.54px;font-size:13.8px;transform:scaleX(0.8844);transform-origin:0 0;color:#4a4a4a;-webkit-text-stroke:0.25px #4a4a4a;">Search tools...</span><div class="a" style="left:1545px;top:41.6px;width:28.6px;height:17px;background:#f8f8f8;border:1px solid #cacaca;border-bottom:1.6px solid #bdbdbd;border-radius:2.5px"></div><div class="a" style="left:1575px;top:41.6px;width:14.2px;height:17px;background:#f8f8f8;border:1px solid #cacaca;border-bottom:1.6px solid #bdbdbd;border-radius:2.5px"></div><span class="t" style="left:1547.40px;top:45.79px;font-size:9.4px;letter-spacing:0.179px;color:#666;font-family:'Liberation Sans','DejaVu Sans',sans-serif;">alt/⌥</span><span class="t" style="left:1579.60px;top:45.63px;font-size:9.6px;color:#666;">c</span>
<div id="strip"><div class="sel"></div></div>
<svg style="left:9.6px;top:41px" width="18.6" height="16.6" ><use href="#tree" width="18.6" height="16.6"/></svg><svg style="left:12.4px;top:71.8px" width="14.8" height="17.2" ><use href="#addf" width="14.8" height="17.2"/></svg><svg style="left:10px;top:105px" width="17.4" height="14.2" ><use href="#comment" width="17.4" height="14.2"/></svg><svg style="left:10.6px;top:135.4px" width="16.6" height="16.6" ><use href="#stopw2" width="16.6" height="16.6"/></svg><div id="panel"></div>
<span class="t" style="left:40.40px;top:74.23px;font-size:12px;letter-spacing:-0.079px;color:#3a3a3a;-webkit-text-stroke:0.3px #3a3a3a;">Features (19)</span><svg style="left:158.6px;top:75.2px" width="17" height="12.8" ><use href="#folderp" width="17" height="12.8"/></svg><svg style="left:186px;top:72.6px" width="17" height="17" ><use href="#stopw" width="17" height="17"/></svg><svg style="left:46.2px;top:102px" width="14.6" height="13.2" ><use href="#funnel" width="14.6" height="13.2"/></svg><div class="a" style="left:71.8px;top:95.2px;width:142px;height:26.4px;border:1px solid #d9d9d9;border-radius:3px;background:#fff"></div><span class="t" style="left:76.80px;top:102.57px;font-size:11.6px;letter-spacing:-0.051px;color:#a2a2a2;font-style:italic;">Filter by name or type</span><div class="a" style="left:203px;top:124px;width:12.4px;height:441px;background:#f5f5f5"></div><div class="a" style="left:203.6px;top:137.6px;width:11.4px;height:373px;background:#c1c1c1"></div><svg style="left:205.6px;top:128.6px" width="7" height="4"><path d="M0 4 L3.5 0 L7 4 Z" fill="#9a9a9a"/></svg><svg style="left:205.6px;top:555.4px" width="7" height="4"><path d="M0 0 L3.5 4 L7 0 Z" fill="#333"/></svg><div class="a" style="left:37px;top:565.4px;width:178px;height:1px;background:#dcdcdc"></div><div class="a" style="left:45px;top:145px;width:1px;height:95px;background:#dedede"></div><div class="a" style="left:41.6px;top:239.6px;width:8px;height:1px;background:#dedede"></div><svg style="left:40.6px;top:130.6px" width="10.4" height="6" ><use href="#chev" width="10.4" height="6"/></svg><span class="t" style="left:57.40px;top:126.63px;font-size:12px;letter-spacing:0.001px;color:#3c3c3c;-webkit-text-stroke:0.2px #3c3c3c;">Default geometry</span><div class="a" style="left:62.6px;top:152.99px;width:7px;height:7px;border-radius:50%;background:#a8a8a8"></div><span class="t" style="left:77.40px;top:150.62px;font-size:12px;letter-spacing:-0.202px;color:#555;-webkit-text-stroke:0.2px #555;">Origin</span><svg style="left:59.4px;top:172.98px" width="13.4" height="13.4" ><use href="#plane" width="13.4" height="13.4"/></svg><span class="t" style="left:78.00px;top:174.01px;font-size:12px;letter-spacing:-0.183px;color:#ababab;">Top</span><svg style="left:59.4px;top:196.37px" width="13.4" height="13.4" ><use href="#plane" width="13.4" height="13.4"/></svg><span class="t" style="left:78.00px;top:197.40px;font-size:12px;letter-spacing:-0.162px;color:#ababab;">Front</span><svg style="left:59.4px;top:219.76px" width="13.4" height="13.4" ><use href="#plane" width="13.4" height="13.4"/></svg><span class="t" style="left:78.00px;top:220.79px;font-size:12px;letter-spacing:-0.283px;color:#ababab;">Right</span><svg style="left:41.6px;top:243.15px" width="13.8" height="13.8" ><use href="#sketchd" width="13.8" height="13.8"/></svg><span class="t" style="left:60.40px;top:244.18px;font-size:12px;letter-spacing:-0.412px;color:#ababab;">Sketch 1</span><svg style="left:41.6px;top:266.74px" width="14.2" height="13.2" ><use href="#revolve" width="14.2" height="13.2"/></svg><span class="t" style="left:60.40px;top:267.74px;font-size:11.8px;letter-spacing:-0.362px;color:#404040;-webkit-text-stroke:0.45px #404040;">Revolve 1</span><svg style="left:41.8px;top:290.13px" width="13.4" height="13.2" ><use href="#fillet" width="13.4" height="13.2"/></svg><span class="t" style="left:60.40px;top:291.13px;font-size:11.8px;letter-spacing:0.007px;color:#404040;-webkit-text-stroke:0.45px #404040;">Fillet 1</span><svg style="left:41.8px;top:313.52px" width="13.4" height="13.2" ><use href="#fillet" width="13.4" height="13.2"/></svg><span class="t" style="left:60.40px;top:314.52px;font-size:11.8px;letter-spacing:0.132px;color:#404040;-webkit-text-stroke:0.45px #404040;">Fillet 2</span><svg style="left:41.6px;top:336.71px" width="13.8" height="13.8" ><use href="#sketchd" width="13.8" height="13.8"/></svg><span class="t" style="left:60.40px;top:337.74px;font-size:12px;letter-spacing:-0.287px;color:#ababab;">Sketch 2</span><svg style="left:41.6px;top:360.3px" width="14.2" height="13.2" ><use href="#revolve" width="14.2" height="13.2"/></svg><span class="t" style="left:60.40px;top:361.30px;font-size:11.8px;letter-spacing:-0.251px;color:#404040;-webkit-text-stroke:0.45px #404040;">Revolve 2</span><svg style="left:41.6px;top:383.49px" width="13.8" height="13.8" ><use href="#sketchd" width="13.8" height="13.8"/></svg><span class="t" style="left:60.40px;top:384.52px;font-size:12px;letter-spacing:-0.287px;color:#ababab;">Sketch 3</span><svg style="left:41.6px;top:407.08px" width="14.2" height="13.2" ><use href="#revolve" width="14.2" height="13.2"/></svg><span class="t" style="left:60.40px;top:408.08px;font-size:11.8px;letter-spacing:-0.251px;color:#404040;-webkit-text-stroke:0.45px #404040;">Revolve 3</span><svg style="left:41.6px;top:430.27px" width="13.8" height="13.8" ><use href="#sketchd" width="13.8" height="13.8"/></svg><span class="t" style="left:60.40px;top:431.30px;font-size:12px;letter-spacing:-0.262px;color:#ababab;">Sketch 4</span><svg style="left:41.6px;top:453.86px" width="14.2" height="13.2" ><use href="#revolve" width="14.2" height="13.2"/></svg><span class="t" style="left:60.40px;top:454.86px;font-size:11.8px;letter-spacing:-0.206px;color:#404040;-webkit-text-stroke:0.45px #404040;">Revolve 4</span><svg style="left:41.8px;top:477.25px" width="13.4" height="13.2" ><use href="#fillet" width="13.4" height="13.2"/></svg><span class="t" style="left:60.40px;top:478.25px;font-size:11.8px;letter-spacing:0.132px;color:#404040;-webkit-text-stroke:0.45px #404040;">Fillet 5</span><svg style="left:41.8px;top:500.64px" width="13.4" height="13.2" ><use href="#fillet" width="13.4" height="13.2"/></svg><span class="t" style="left:60.40px;top:501.64px;font-size:11.8px;letter-spacing:0.132px;color:#404040;-webkit-text-stroke:0.45px #404040;">Fillet 6</span><svg style="left:41.8px;top:524.03px" width="13.4" height="13.2" ><use href="#fillet" width="13.4" height="13.2"/></svg><span class="t" style="left:60.40px;top:525.03px;font-size:11.8px;letter-spacing:0.132px;color:#404040;-webkit-text-stroke:0.45px #404040;">Fillet 3</span><svg style="left:41.8px;top:547.42px" width="13.4" height="13.2" ><use href="#fillet" width="13.4" height="13.2"/></svg><span class="t" style="left:60.40px;top:548.42px;font-size:11.8px;letter-spacing:0.157px;color:#404040;-webkit-text-stroke:0.45px #404040;">Fillet 4</span><svg style="left:40.6px;top:576.4px" width="10.4" height="6" ><use href="#chev" width="10.4" height="6"/></svg><span class="t" style="left:57.40px;top:573.23px;font-size:12px;letter-spacing:-0.112px;color:#3c3c3c;-webkit-text-stroke:0.2px #3c3c3c;">Parts (3)</span><svg style="left:59.6px;top:595.4px" width="13.6" height="13.4" ><use href="#part" width="13.6" height="13.4"/></svg><span class="t" style="left:77.40px;top:596.63px;font-size:12px;letter-spacing:-0.136px;color:#3c3c3c;-webkit-text-stroke:0.2px #3c3c3c;">Part 1</span><svg style="left:59.6px;top:618.8px" width="13.6" height="13.4" ><use href="#part" width="13.6" height="13.4"/></svg><span class="t" style="left:77.40px;top:620.03px;font-size:12px;letter-spacing:-0.136px;color:#3c3c3c;-webkit-text-stroke:0.2px #3c3c3c;">Part 2</span><svg style="left:59.6px;top:642.2px" width="13.6" height="13.4" ><use href="#part" width="13.6" height="13.4"/></svg><span class="t" style="left:77.40px;top:643.43px;font-size:12px;letter-spacing:-0.136px;color:#3c3c3c;-webkit-text-stroke:0.2px #3c3c3c;">Part 3</span><div class="a" style="left:222px;top:428px;width:29px;height:32px;background:#fff;border:1px solid #dedede;border-left:none"></div><svg style="left:227.4px;top:436px" width="17.6" height="15.6" ><use href="#treebtn" width="17.6" height="15.6"/></svg>
<div id="tabs"></div>
<svg style="left:10.6px;top:842.6px" width="16.4" height="15" ><use href="#tabmgr" width="16.4" height="15"/></svg><svg style="left:44.6px;top:843.6px" width="13.6" height="13.6" ><use href="#plus" width="13.6" height="13.6"/></svg><div class="a" style="left:72.4px;top:837.4px;width:178px;height:26.6px;background:#fff;border-bottom:2.4px solid #2f63c0"></div><svg style="left:82px;top:841.4px" width="14.6" height="15.4" ><use href="#tabps" width="14.6" height="15.4"/></svg><span class="t" style="left:101.40px;top:844.03px;font-size:12px;letter-spacing:-0.298px;color:#444;">FIDGET TOY</span><div class="a" style="left:253.4px;top:838.4px;width:180px;height:24px;background:#e6e6e6;border-radius:0 0 4px 4px"></div><svg style="left:263.4px;top:842.8px" width="15.6" height="13.6" ><use href="#tabdr" width="15.6" height="13.6"/></svg><span class="t" style="left:283.40px;top:844.03px;font-size:12px;letter-spacing:-0.282px;color:#555;">FIDGET TOY DRAWING</span>
</body>
</html>
